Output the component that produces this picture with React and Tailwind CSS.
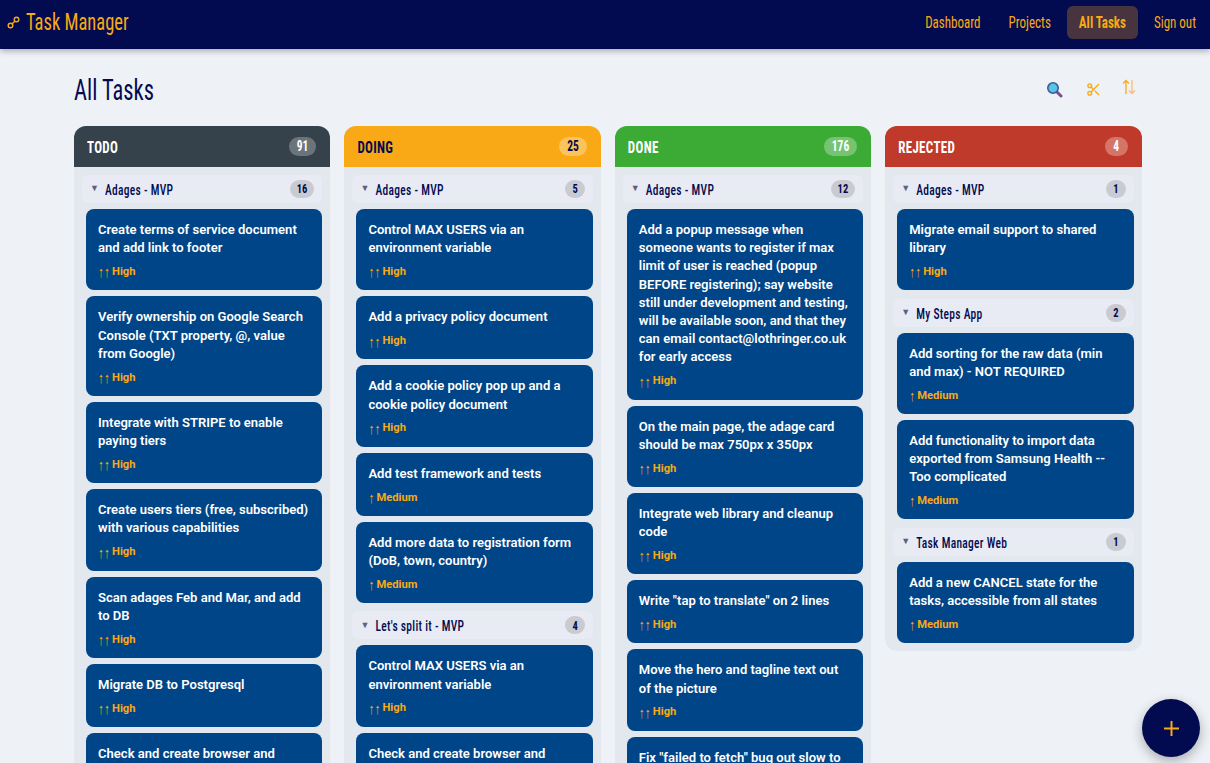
import { Scissors } from 'lucide-react';

// no condensed display face is installed, so stretch Roboto Condensed upward
const HEAD = "font-['Roboto_Condensed','Liberation_Sans_Narrow','DejaVu_Sans_Condensed',sans-serif] inline-block scale-y-[1.3]";

const columns = [
  {
    name: 'TODO',
    count: 91,
    head: 'bg-[#36424b] text-white',
    badge: 'bg-[#6b747b] text-white',
    groups: [
      {
        name: 'Adages - MVP',
        count: 16,
        tasks: [
          ['Create terms of service document and add link to footer', 'High'],
          ['Verify ownership on Google Search Console (TXT property, @, value from Google)', 'High'],
          ['Integrate with STRIPE to enable paying tiers', 'High'],
          ['Create users tiers (free, subscribed) with various capabilities', 'High'],
          ['Scan adages Feb and Mar, and add to DB', 'High'],
          ['Migrate DB to Postgresql', 'High'],
          ['Check and create browser and mobile compatibility', 'High'],
        ],
      },
    ],
  },
  {
    name: 'DOING',
    count: 25,
    head: 'bg-[#f9a915] text-[#020b50]',
    badge: 'bg-[#fbc35c] text-[#020b50]',
    groups: [
      {
        name: 'Adages - MVP',
        count: 5,
        tasks: [
          ['Control MAX USERS via an environment variable', 'High'],
          ['Add a privacy policy document', 'High'],
          ['Add a cookie policy pop up and a cookie policy document', 'High'],
          ['Add test framework and tests', 'Medium'],
          ['Add more data to registration form (DoB, town, country)', 'Medium'],
        ],
      },
      {
        name: "Let's split it - MVP",
        count: 4,
        tasks: [
          ['Control MAX USERS via an environment variable', 'High'],
          ['Check and create browser and mobile compatibility', 'High'],
        ],
      },
    ],
  },
  {
    name: 'DONE',
    count: 176,
    head: 'bg-[#3bab36] text-white',
    badge: 'bg-[#76c472] text-white',
    groups: [
      {
        name: 'Adages - MVP',
        count: 12,
        tasks: [
          ['Add a popup message when someone wants to register if max limit of user is reached (popup BEFORE registering); say website still under development and testing, will be available soon, and that they can email contact@lothringer.co.uk for early access', 'High'],
          ['On the main page, the adage card should be max 750px x 350px', 'High'],
          ['Integrate web library and cleanup code', 'High'],
          ['Write "tap to translate" on 2 lines', 'High'],
          ['Move the hero and tagline text out of the picture', 'High'],
          ['Fix "failed to fetch" bug out slow to respond', 'High'],
        ],
      },
    ],
  },
  {
    name: 'REJECTED',
    count: 4,
    head: 'bg-[#bf3a2b] text-white',
    badge: 'bg-[#d57568] text-white',
    groups: [
      {
        name: 'Adages - MVP',
        count: 1,
        tasks: [['Migrate email support to shared library', 'High']],
      },
      {
        name: 'My Steps App',
        count: 2,
        tasks: [
          ['Add sorting for the raw data (min and max) - NOT REQUIRED', 'Medium'],
          ['Add functionality to import data exported from Samsung Health -- Too complicated', 'Medium'],
        ],
      },
      {
        name: 'Task Manager Web',
        count: 1,
        tasks: [['Add a new CANCEL state for the tasks, accessible from all states', 'Medium']],
      },
    ],
  },
];

function TaskCard({ title, priority }) {
  return (
    <div className="ml-1 rounded-lg bg-[#004587] px-3 pt-3 pb-[9.93px] text-white">
      <p className="text-[13.05px] leading-[18.2px] font-semibold">{title}</p>
      <p className="mt-[7px] flex h-4 items-center text-[11.2px] font-bold text-[#f9a915]">
        <span className="mr-[2px] inline-block scale-y-[1.25] font-['Liberation_Sans',sans-serif] text-[12px] leading-none font-normal">
          {priority === 'High' ? '↑↑' : '↑'}
        </span>
        {priority}
      </p>
    </div>
  );
}

function Group({ group }) {
  return (
    <div className="flex flex-col gap-1.5">
      <div className="flex h-7 items-center rounded-md bg-[#e8ebf3] pr-[8px] pl-2">
        <span className="w-[15px] text-[9px] text-[#5b6280]">▼</span>
        <span className="flex-1">
          <span className={`${HEAD} text-[11.5px] font-medium tracking-wide text-[#020b50]`}>{group.name}</span>
        </span>
        <span className="flex h-[18px] min-w-[19px] items-center justify-center rounded-full bg-[#c9cbd1] px-[7px] text-[#020b50]">
          <span className={`${HEAD} text-[10.5px] font-bold`}>{group.count}</span>
        </span>
      </div>
      {group.tasks.map((task, i) => (
        <TaskCard key={i} title={task[0]} priority={task[1]} />
      ))}
    </div>
  );
}

function Column({ column }) {
  return (
    <section className="self-start overflow-hidden rounded-xl bg-[#e3e8ef]">
      <div className={`flex h-[41px] items-center justify-between pr-[14px] pl-[13px] ${column.head}`}>
        <h2 className={`${HEAD} mt-[2px] text-[13px] font-bold tracking-wide`}>{column.name}</h2>
        <span className={`flex h-[19px] min-w-[23px] items-center justify-center rounded-full px-2 ${column.badge}`}>
          <span className={`${HEAD} text-[11.5px] font-bold`}>{column.count}</span>
        </span>
      </div>
      <div className="flex flex-col gap-[8.2px] p-2">
        {column.groups.map((group) => (
          <Group key={group.name} group={group} />
        ))}
      </div>
    </section>
  );
}

function NavLink({ label, active }) {
  return (
    <a className={`flex h-[33px] items-center rounded-md px-3 pt-[2px] ${active ? 'bg-[#47343f]' : ''}`}>
      <span className={`${HEAD} text-[13px] ${active ? 'font-bold' : 'font-normal'}`}>{label}</span>
    </a>
  );
}

export default function App() {
  return (
    <div className="relative h-[763px] overflow-hidden bg-[#eef2f7] font-['Roboto',sans-serif]">
      <header className="relative z-10 flex h-[49px] items-center justify-between bg-[#020b50] pr-[2px] pb-[5px] pl-[7px] text-[#f9a915] shadow-[0_2px_6px_rgba(0,0,0,0.3)]">
        <div className="flex items-center gap-[6px]">
          <svg width="13" height="13" viewBox="0 0 13 13" fill="none" stroke="currentColor" strokeWidth="1.4">
            <circle cx="3.5" cy="9.5" r="2.3" />
            <circle cx="9.5" cy="3.5" r="2.3" />
            <path d="M5.2 7.8 7.8 5.2" />
          </svg>
          <span className={`${HEAD} mt-[2px] text-[18.5px] font-normal`}>Task Manager</span>
        </div>
        <nav className="flex items-center gap-[4px]">
          <NavLink label="Dashboard" />
          <NavLink label="Projects" />
          <NavLink label="All Tasks" active />
          <NavLink label="Sign out" />
        </nav>
      </header>

      <main className="pr-[68.4px] pl-[74px]">
        <div className="flex h-[77px] items-center justify-between pt-[5px]">
          <h1 className={`${HEAD} text-[22.5px] leading-none font-normal text-[#020b50]`}>All Tasks</h1>
          <div className="mr-[6px] mb-[4px] flex items-center">
            <svg width="17" height="17" viewBox="0 0 17 17" className="mt-[2px]">
              <path d="M10.5 10.5 15 15" stroke="#7d4a94" strokeWidth="3" strokeLinecap="round" />
              <circle cx="7" cy="7" r="5.2" fill="#55c5e8" stroke="#3f5a92" strokeWidth="1.6" />
            </svg>
            <Scissors size={15} color="#f9a915" strokeWidth={2.2} className="mt-[2px] ml-[23px]" />
            <svg width="14" height="16" viewBox="0 0 14 16" fill="none" strokeWidth="1.3" className="mb-[2px] ml-[21px]">
              <path d="M4 15V1.5M1 4.5l3-3 3 3" stroke="#f9a915" />
              <path d="M10 1v13.5M7 11.5l3 3 3-3" stroke="#f7bd7b" />
            </svg>
          </div>
        </div>
        <div className="grid grid-cols-4 gap-[14px]">
          {columns.map((column) => (
            <Column key={column.name} column={column} />
          ))}
        </div>
      </main>

      <button type="button" className="absolute right-[10px] bottom-[6px] flex h-[58px] w-[58px] items-center justify-center rounded-full bg-[#020b50] text-[#f9a915] shadow-[0_4px_12px_rgba(0,0,0,0.3)]">
        <svg width="15" height="15" viewBox="0 0 15 15" stroke="currentColor" strokeWidth="2">
          <path d="M7.5 0v15M0 7.5h15" />
        </svg>
      </button>
    </div>
  );
}
